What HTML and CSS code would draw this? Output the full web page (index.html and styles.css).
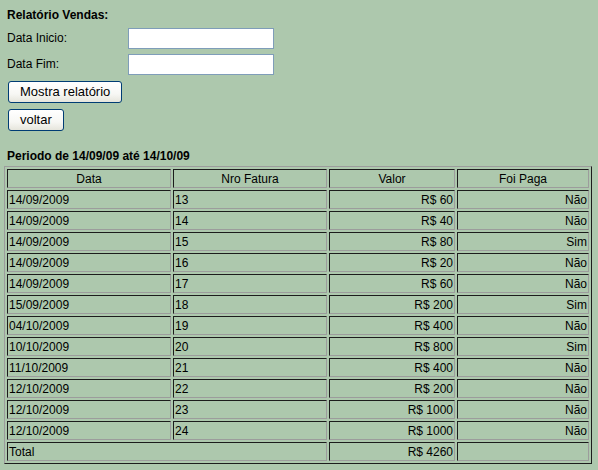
FILE: index.html
```html
<!DOCTYPE html>
<html lang="pt">
<head>
<meta charset="utf-8">
<title>Relatório Vendas</title>
<link rel="stylesheet" href="styles.css">
</head>
<body>
<div class="page">
  <div class="title">Relatório Vendas:</div>
  <div class="form">
    <label class="lbl" for="ini">Data Inicio:</label>
    <input class="field" id="ini" type="text">
    <label class="lbl" for="fim">Data Fim:</label>
    <input class="field" id="fim" type="text">
  </div>
  <div class="actions">
    <button class="btn" type="button">Mostra relatório</button>
    <button class="btn" type="button">voltar</button>
  </div>
  <div class="period">Periodo de 14/09/09 até 14/10/09</div>
  <table class="grid">
    <thead>
      <tr><th class="c1">Data</th><th class="c2">Nro Fatura</th><th class="c3">Valor</th><th class="c4">Foi Paga</th></tr>
    </thead>
    <tbody>
      <tr><td>14/09/2009</td><td>13</td><td class="r">R$ 60</td><td class="r">Não</td></tr>
      <tr><td>14/09/2009</td><td>14</td><td class="r">R$ 40</td><td class="r">Não</td></tr>
      <tr><td>14/09/2009</td><td>15</td><td class="r">R$ 80</td><td class="r">Sim</td></tr>
      <tr><td>14/09/2009</td><td>16</td><td class="r">R$ 20</td><td class="r">Não</td></tr>
      <tr><td>14/09/2009</td><td>17</td><td class="r">R$ 60</td><td class="r">Não</td></tr>
      <tr><td>15/09/2009</td><td>18</td><td class="r">R$ 200</td><td class="r">Sim</td></tr>
      <tr><td>04/10/2009</td><td>19</td><td class="r">R$ 400</td><td class="r">Não</td></tr>
      <tr><td>10/10/2009</td><td>20</td><td class="r">R$ 800</td><td class="r">Sim</td></tr>
      <tr><td>11/10/2009</td><td>21</td><td class="r">R$ 400</td><td class="r">Não</td></tr>
      <tr><td>12/10/2009</td><td>22</td><td class="r">R$ 200</td><td class="r">Não</td></tr>
      <tr><td>12/10/2009</td><td>23</td><td class="r">R$ 1000</td><td class="r">Não</td></tr>
      <tr><td>12/10/2009</td><td>24</td><td class="r">R$ 1000</td><td class="r">Não</td></tr>
      <tr><td colspan="2">Total</td><td class="r">R$ 4260</td><td></td></tr>
    </tbody>
  </table>
</div>
</body>
</html>
```
FILE: styles.css
```css
html, body {
  margin: 0;
  padding: 0;
  background: #adc8ad;
}
body {
  font-family: "Liberation Sans", Arial, sans-serif;
  font-size: 12px;
  line-height: 15px;
  color: #000;
}
.page {
  padding: 8px 4px 0 4px;
}
.title {
  font-weight: bold;
  padding-left: 3px;
}
.form {
  margin-top: 5px;
  padding-left: 3px;
  display: grid;
  grid-template-columns: 121px 146px;
  row-gap: 5px;
  align-items: center;
}
.field {
  box-sizing: border-box;
  width: 146px;
  height: 21px;
  margin: 0;
  border: 1px solid #7f9db9;
  background: #fff;
  padding: 0 2px;
  font: inherit;
}
.actions {
  margin-top: 6px;
  padding-left: 4px;
  display: flex;
  flex-direction: column;
  align-items: flex-start;
  gap: 6px;
}
.btn {
  box-sizing: border-box;
  height: 22px;
  margin: 0;
  padding: 0 11px;
  border: 1px solid #003c74;
  border-radius: 3px;
  background: linear-gradient(#ffffff 0%, #f7f7f4 60%, #e6e5dc 100%);
  font-family: "Liberation Sans", Arial, sans-serif;
  font-size: 13px;
  line-height: 20px;
  color: #000;
}
.period {
  margin-top: 18px;
  padding-left: 3px;
  font-weight: bold;
}
.grid {
  margin-top: 2px;
  width: 588px;
  table-layout: fixed;
  border-collapse: separate;
  border-spacing: 2px;
  border: 1px solid;
  border-color: #9c9c9c #1c1c1c #1c1c1c #9c9c9c;
}
.grid th,
.grid td {
  box-sizing: border-box;
  height: 19px;
  padding: 2px 1px 0 1px;
  border: 1px solid;
  border-color: #1c1c1c #9c9c9c #9c9c9c #1c1c1c;
  font-weight: normal;
  text-align: left;
  vertical-align: top;
  white-space: nowrap;
  line-height: 15px;
}
.grid th {
  text-align: center;
}
.grid .c1 { width: 164px; }
.grid .c2 { width: 154px; }
.grid .c3 { width: 126px; }
.grid .c4 { width: 132px; }
.grid td.r {
  text-align: right;
}
```
